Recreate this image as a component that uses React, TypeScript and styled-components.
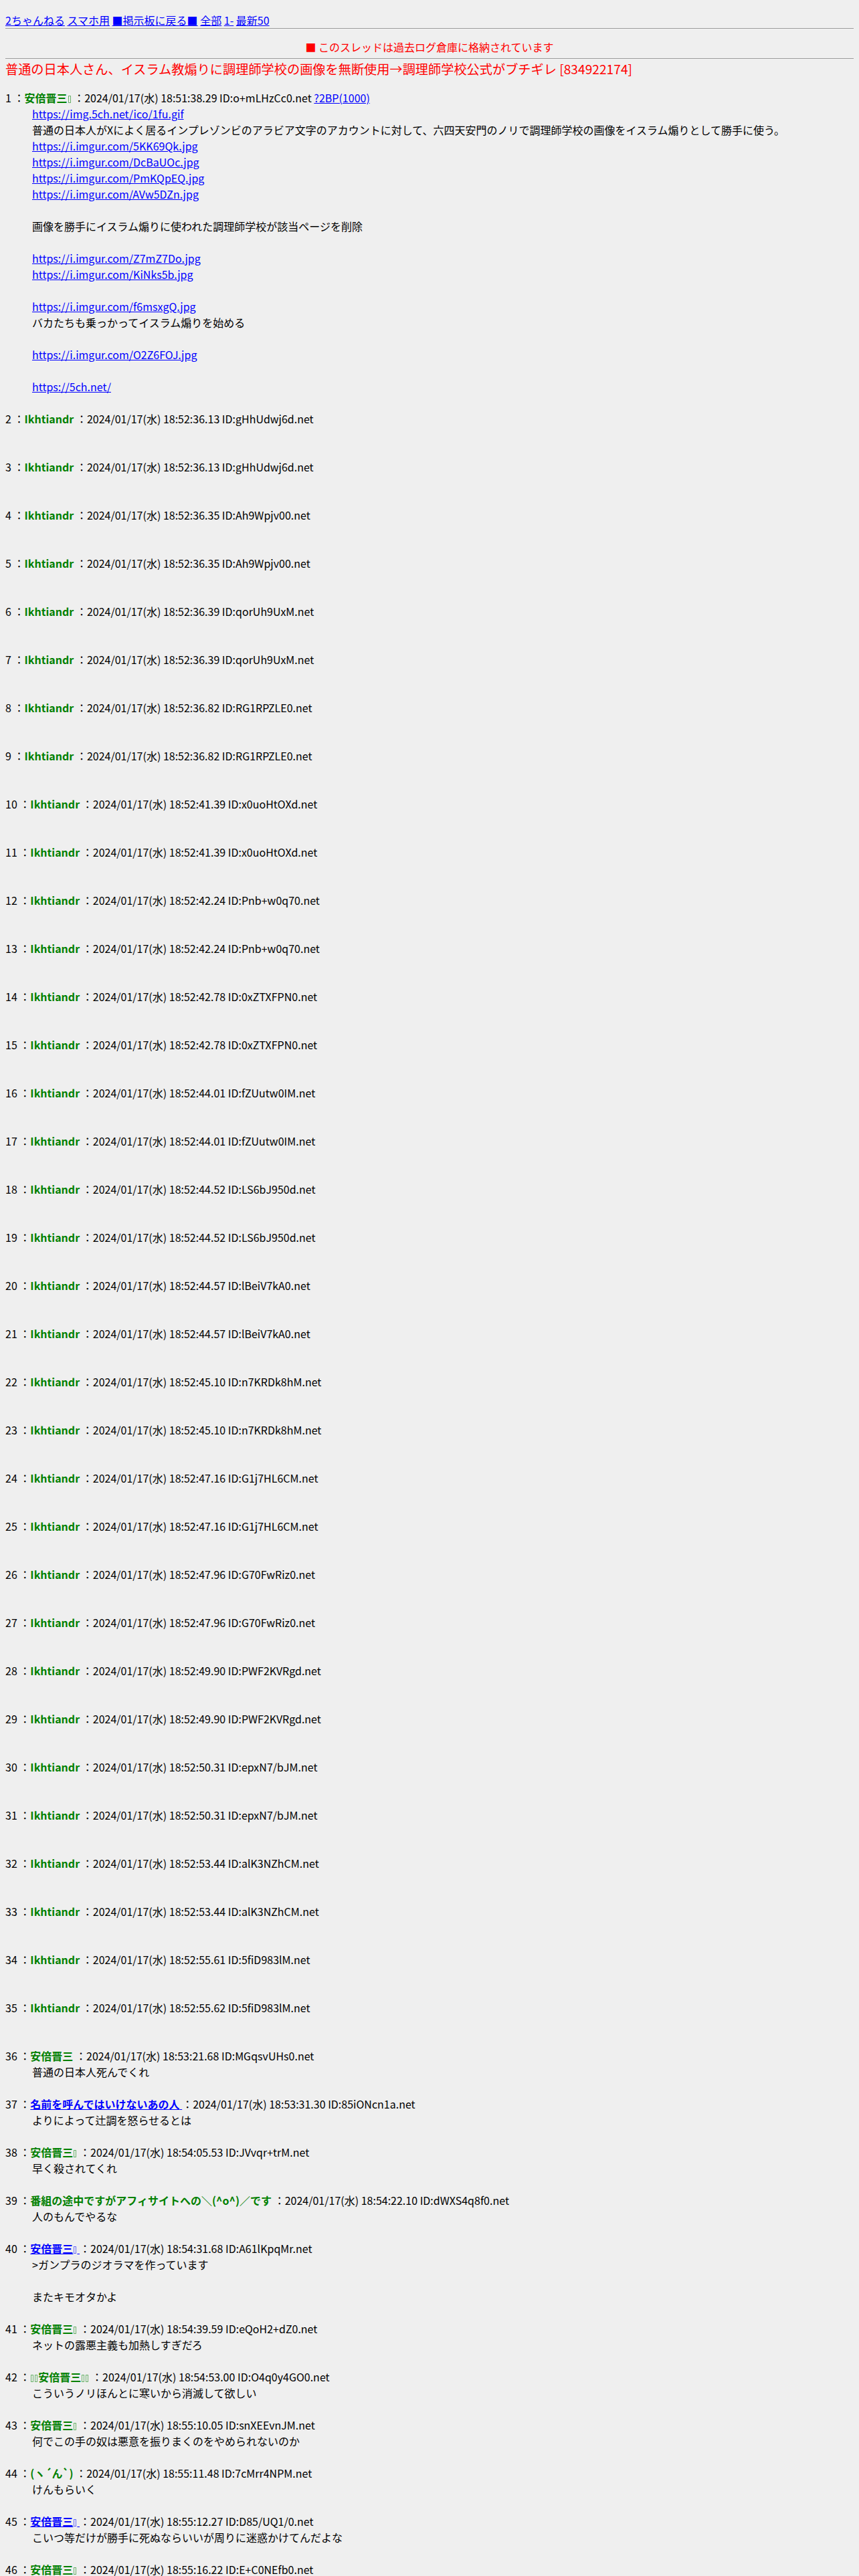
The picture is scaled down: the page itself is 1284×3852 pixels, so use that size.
import React, { Fragment } from "react";
import styled, { createGlobalStyle } from "styled-components";

const GlobalStyle = createGlobalStyle`
  html, body {
    background: #efefef;
  }
  body {
    margin: 8px;
    color: #000;
    font-family: "Noto Sans CJK JP", "Noto Sans", sans-serif;
    font-size: 16px;
    line-height: 24px;
  }
`;

const Nav = styled.div`
  padding-top: 10px;
  line-height: 24px;
`;

const NavLink = styled.a`
  color: #0000ff;
  text-decoration: underline;
`;

const Rule = styled.hr`
  margin: 0;
  height: 0;
  border: 0;
  border-top: 1px solid #9a9a9a;
  border-bottom: 1px solid #f4f4f4;
`;

const Notice = styled.div`
  margin: 14px 0 5px;
  color: #ff0000;
  text-align: center;
`;

const Title = styled.h1`
  margin: 0;
  color: #ff0000;
  font-size: 19.2px;
  font-weight: normal;
  line-height: 28.8px;
`;

const Thread = styled.dl`
  margin: 16px 0 0;
`;

const PostHead = styled.dt`
  margin: 0;
`;

const PostBody = styled.dd`
  margin: 0 0 0 40px;
`;

const Name = styled.b`
  color: #008000;
  font-weight: bold;
`;

const NameLink = styled.a`
  color: #0000ff;
  font-weight: bold;
  text-decoration: underline;
`;

const BodyLink = styled.a`
  color: #0000ff;
  text-decoration: underline;
`;

/* a missing-glyph box, as the pot emoji shows where no emoji font exists */
const Tofu = styled.span`
  display: inline-block;
  box-sizing: border-box;
  width: 4px;
  height: 11px;
  margin: 0 1px 0 1px;
  border: 1px solid currentColor;
  opacity: 0.55;
  vertical-align: -1px;
`;

type Line = { text: string; link?: boolean };

type Post = {
  no: number;
  name: string;
  mail?: boolean;
  time: string;
  id: string;
  extra?: string;
  body: Line[];
};

const t = (text: string): Line => ({ text });
const l = (text: string): Line => ({ text, link: true });
const blank: Line = { text: "" };

const POT = "\u{1F3FA}";
const ABE = `安倍晋三${POT}`;

const empty = (no: number, time: string, id: string): Post => ({
  no,
  name: "Ikhtiandr",
  time,
  id,
  body: [],
});

const posts: Post[] = [
  {
    no: 1,
    name: ABE,
    time: "18:51:38.29",
    id: "o+mLHzCc0.net",
    extra: "?2BP(1000)",
    body: [
      l("https://img.5ch.net/ico/1fu.gif"),
      t(
        "普通の日本人がXによく居るインプレゾンビのアラビア文字のアカウントに対して、六四天安門のノリで調理師学校の画像をイスラム煽りとして勝手に使う。"
      ),
      l("https://i.imgur.com/5KK69Qk.jpg"),
      l("https://i.imgur.com/DcBaUOc.jpg"),
      l("https://i.imgur.com/PmKQpEQ.jpg"),
      l("https://i.imgur.com/AVw5DZn.jpg"),
      blank,
      t("画像を勝手にイスラム煽りに使われた調理師学校が該当ページを削除"),
      blank,
      l("https://i.imgur.com/Z7mZ7Do.jpg"),
      l("https://i.imgur.com/KiNks5b.jpg"),
      blank,
      l("https://i.imgur.com/f6msxgQ.jpg"),
      t("バカたちも乗っかってイスラム煽りを始める"),
      blank,
      l("https://i.imgur.com/O2Z6FOJ.jpg"),
      blank,
      l("https://5ch.net/"),
    ],
  },
  empty(2, "18:52:36.13", "gHhUdwj6d.net"),
  empty(3, "18:52:36.13", "gHhUdwj6d.net"),
  empty(4, "18:52:36.35", "Ah9Wpjv00.net"),
  empty(5, "18:52:36.35", "Ah9Wpjv00.net"),
  empty(6, "18:52:36.39", "qorUh9UxM.net"),
  empty(7, "18:52:36.39", "qorUh9UxM.net"),
  empty(8, "18:52:36.82", "RG1RPZLE0.net"),
  empty(9, "18:52:36.82", "RG1RPZLE0.net"),
  empty(10, "18:52:41.39", "x0uoHtOXd.net"),
  empty(11, "18:52:41.39", "x0uoHtOXd.net"),
  empty(12, "18:52:42.24", "Pnb+w0q70.net"),
  empty(13, "18:52:42.24", "Pnb+w0q70.net"),
  empty(14, "18:52:42.78", "0xZTXFPN0.net"),
  empty(15, "18:52:42.78", "0xZTXFPN0.net"),
  empty(16, "18:52:44.01", "fZUutw0IM.net"),
  empty(17, "18:52:44.01", "fZUutw0IM.net"),
  empty(18, "18:52:44.52", "LS6bJ950d.net"),
  empty(19, "18:52:44.52", "LS6bJ950d.net"),
  empty(20, "18:52:44.57", "lBeiV7kA0.net"),
  empty(21, "18:52:44.57", "lBeiV7kA0.net"),
  empty(22, "18:52:45.10", "n7KRDk8hM.net"),
  empty(23, "18:52:45.10", "n7KRDk8hM.net"),
  empty(24, "18:52:47.16", "G1j7HL6CM.net"),
  empty(25, "18:52:47.16", "G1j7HL6CM.net"),
  empty(26, "18:52:47.96", "G70FwRiz0.net"),
  empty(27, "18:52:47.96", "G70FwRiz0.net"),
  empty(28, "18:52:49.90", "PWF2KVRgd.net"),
  empty(29, "18:52:49.90", "PWF2KVRgd.net"),
  empty(30, "18:52:50.31", "epxN7/bJM.net"),
  empty(31, "18:52:50.31", "epxN7/bJM.net"),
  empty(32, "18:52:53.44", "alK3NZhCM.net"),
  empty(33, "18:52:53.44", "alK3NZhCM.net"),
  empty(34, "18:52:55.61", "5fiD983lM.net"),
  empty(35, "18:52:55.62", "5fiD983lM.net"),
  {
    no: 36,
    name: "安倍晋三",
    time: "18:53:21.68",
    id: "MGqsvUHs0.net",
    body: [t("普通の日本人死んでくれ")],
  },
  {
    no: 37,
    name: "名前を呼んではいけないあの人",
    mail: true,
    time: "18:53:31.30",
    id: "85iONcn1a.net",
    body: [t("よりによって辻調を怒らせるとは")],
  },
  {
    no: 38,
    name: ABE,
    time: "18:54:05.53",
    id: "JVvqr+trM.net",
    body: [t("早く殺されてくれ")],
  },
  {
    no: 39,
    name: "番組の途中ですがアフィサイトへの＼(^o^)／です",
    time: "18:54:22.10",
    id: "dWXS4q8f0.net",
    body: [t("人のもんでやるな")],
  },
  {
    no: 40,
    name: ABE,
    mail: true,
    time: "18:54:31.68",
    id: "A61lKpqMr.net",
    body: [t(">ガンプラのジオラマを作っています"), blank, t("またキモオタかよ")],
  },
  {
    no: 41,
    name: ABE,
    time: "18:54:39.59",
    id: "eQoH2+dZ0.net",
    body: [t("ネットの露悪主義も加熱しすぎだろ")],
  },
  {
    no: 42,
    name: `${POT}${POT}安倍晋三${POT}${POT}`,
    time: "18:54:53.00",
    id: "O4q0y4GO0.net",
    body: [t("こういうノリほんとに寒いから消滅して欲しい")],
  },
  {
    no: 43,
    name: ABE,
    time: "18:55:10.05",
    id: "snXEEvnJM.net",
    body: [t("何でこの手の奴は悪意を振りまくのをやめられないのか")],
  },
  {
    no: 44,
    name: "(ヽ´ん`)",
    time: "18:55:11.48",
    id: "7cMrr4NPM.net",
    body: [t("けんもらいく")],
  },
  {
    no: 45,
    name: ABE,
    mail: true,
    time: "18:55:12.27",
    id: "D85/UQ1/0.net",
    body: [t("こいつ等だけが勝手に死ぬならいいが周りに迷惑かけてんだよな")],
  },
  {
    no: 46,
    name: ABE,
    time: "18:55:16.22",
    id: "E+C0NEfb0.net",
    body: [],
  },
];

const NameText: React.FC<{ name: string }> = ({ name }) => {
  const parts = name.split(POT);
  return (
    <>
      {parts.map((p, i) => (
        <Fragment key={i}>
          {i > 0 && <Tofu role="img" aria-label={POT} title={POT} />}
          {p}
        </Fragment>
      ))}
    </>
  );
};

const PostItem: React.FC<{ post: Post }> = ({ post }) => (
  <>
    <PostHead>
      {post.no} ：
      {post.mail ? (
        <NameLink href="mailto:sage">
          <NameText name={post.name} />{" "}
        </NameLink>
      ) : (
        <Name>
          <NameText name={post.name} />{" "}
        </Name>
      )}
      ：2024/01/17(水) {post.time} ID:{post.id}
      {post.extra && (
        <>
          {" "}
          <BodyLink href="#">{post.extra}</BodyLink>
        </>
      )}
    </PostHead>
    <PostBody>
      {post.body.map((line, i) => (
        <Fragment key={i}>
          {i > 0 && <br />}
          {line.link ? <BodyLink href={line.text}>{line.text}</BodyLink> : line.text}
        </Fragment>
      ))}
      <br />
      <br />
    </PostBody>
  </>
);

export default function App() {
  return (
    <>
      <GlobalStyle />
      <Nav>
        <NavLink href="#">2ちゃんねる</NavLink> <NavLink href="#">スマホ用</NavLink>{" "}
        <NavLink href="#">■掲示板に戻る■</NavLink> <NavLink href="#">全部</NavLink>{" "}
        <NavLink href="#">1-</NavLink> <NavLink href="#">最新50</NavLink>
      </Nav>
      <Rule />
      <Notice>■ このスレッドは過去ログ倉庫に格納されています</Notice>
      <Rule />
      <Title>普通の日本人さん、イスラム教煽りに調理師学校の画像を無断使用→調理師学校公式がブチギレ [834922174]</Title>
      <Thread>
        {posts.map((p) => (
          <PostItem key={p.no} post={p} />
        ))}
      </Thread>
    </>
  );
}
